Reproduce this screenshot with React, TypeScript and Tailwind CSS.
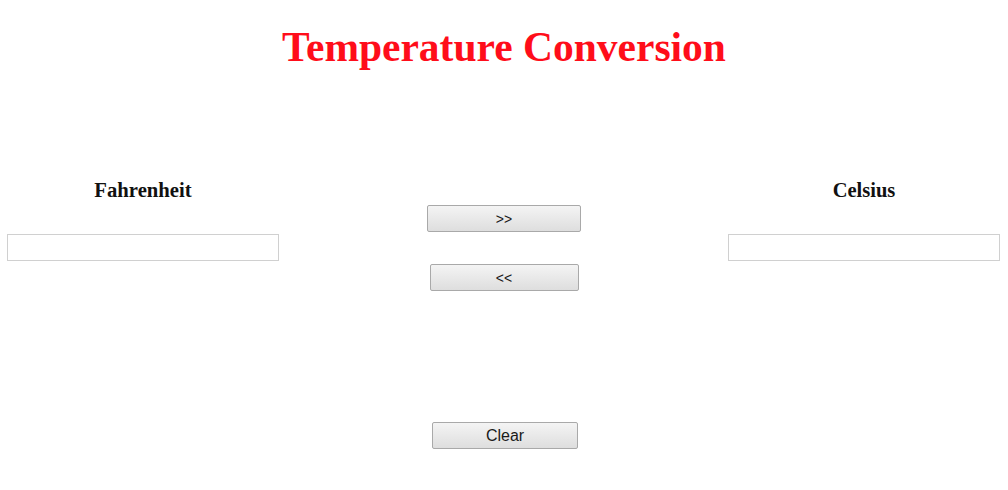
export default function App() {
  const btn =
    "h-[27px] rounded-[2px] border border-[#a9a9a9] bg-gradient-to-b from-[#f4f4f4] to-[#dedede] text-[#1a1a1a] font-['Liberation_Sans',Arial,sans-serif] leading-none";
  const input = "w-[272px] h-[27px] border border-[#d0d0d0] bg-white";
  return (
    <div className="w-[1008px] h-[490px] bg-white font-['Liberation_Serif','Times_New_Roman',serif]">
      <h1 className="pt-[24px] text-center text-[41.5px] leading-[46px] font-bold text-[#ff0d1a]">
        Temperature Conversion
      </h1>
      <div className="mt-[109px] grid grid-cols-[286px_1fr_288px]">
        <div className="flex flex-col items-center">
          <div className="text-[20.7px] font-bold leading-[22px] text-[#111]">Fahrenheit</div>
          <input className={input + " mt-[33px]"} />
        </div>
        <div className="flex flex-col items-center pt-[26px] pl-[2px]">
          <button className={btn + " w-[154px] text-[14px]"}>&gt;&gt;</button>
          <button className={btn + " w-[149px] text-[14px] mt-[32px]"}>&lt;&lt;</button>
          <button className={btn + " w-[146px] text-[16px] mt-[131px] ml-[2px]"}>Clear</button>
        </div>
        <div className="flex flex-col items-center">
          <div className="text-[20.5px] font-bold leading-[22px] text-[#111]">Celsius</div>
          <input className={input + " mt-[33px]"} />
        </div>
      </div>
    </div>
  );
}
